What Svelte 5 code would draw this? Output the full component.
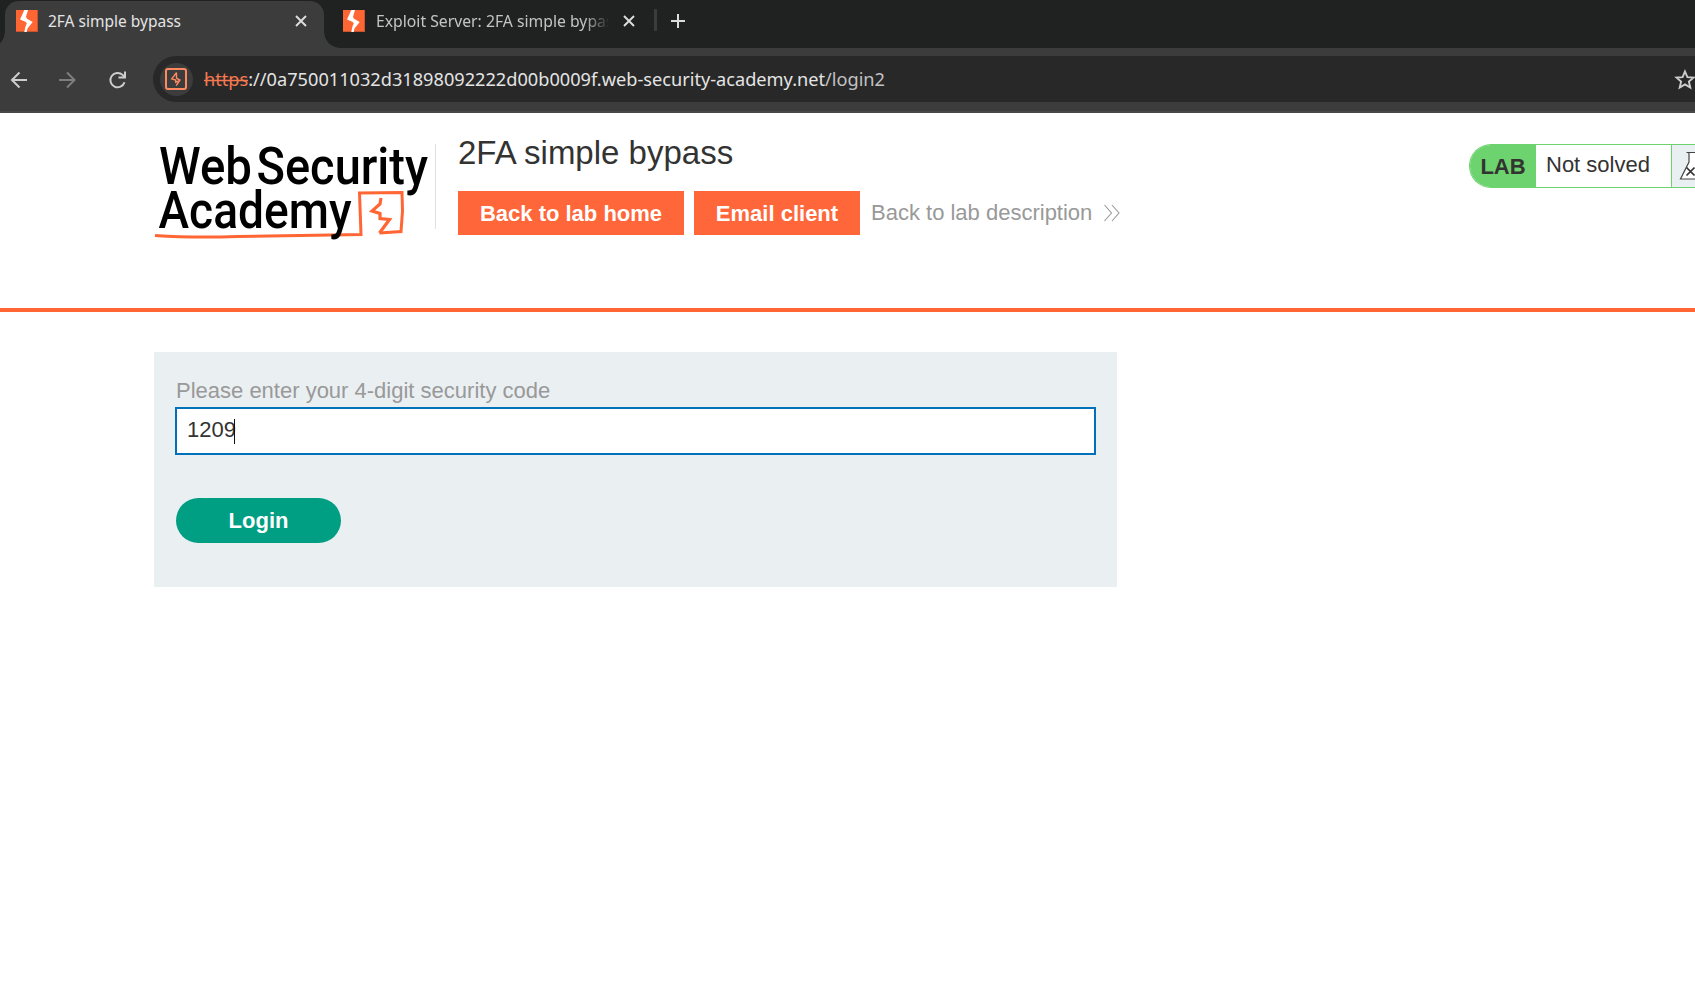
<script>
  let code = $state('1209');
</script>

{#snippet favicon()}
  <svg class="fav" viewBox="0 0 22 22"><rect width="22" height="22" fill="#ff6633"/><path d="M0 21.500h22M21.500 0v22" stroke="#c8552f" stroke-width="1"/><path d="M8.300 0H12L10 6.800l1 2 5.700 3.200-5.200 6.500-.8 3.500H8.300L9.600 16l1.200-2.500-1-1.500L4 9.500z" fill="#fff"/></svg>
{/snippet}
{#snippet close()}
  <svg class="close" viewBox="0 0 12 12"><path d="M1 1l10 10M11 1L1 11" stroke="currentColor" stroke-width="1.900"/></svg>
{/snippet}

<div class="window">
  <div class="tabs">
    <div class="tab active">
      {@render favicon()}
      <span class="title t1"><svg class="line" width="133" height="30"><text x="0" y="21" textLength="133" lengthAdjust="spacingAndGlyphs">2FA simple bypass</text></svg></span>
      {@render close()}
    </div>
    <div class="tab idle">
      {@render favicon()}
      <span class="title t2"><svg class="line" width="260" height="30"><text x="0" y="21" textLength="245" lengthAdjust="spacingAndGlyphs">Exploit Server: 2FA simple bypass</text></svg></span>
      {@render close()}
    </div>
    <i class="sep"></i>
    <svg class="plus" viewBox="0 0 14 14"><path d="M7 0v14M0 7h14" stroke="#dcdcdc" stroke-width="2"/></svg>
  </div>

  <div class="toolbar">
    <svg class="nav" width="126" height="24" viewBox="0 0 126 24" fill="none" stroke-width="2">
      <path d="M17 12H2M9.500 4.500L2 12l7.500 7.500" stroke="#cdcdcd"/>
      <path d="M49 12h15M57 4.500l7.500 7.500-7.500 7.500" stroke="#7e7e7e"/>
      <path d="M114.500 14.200A7.200 7.200 0 1 1 112.600 6.900L115 9.200M108.500 9.500H115V3.500" stroke="#cdcdcd"/>
    </svg>
    <div class="address">
      <span class="site"><svg width="22" height="22" viewBox="0 0 22 22" fill="none" stroke="#ff8a62"><rect x="1" y="1" width="20" height="20" rx="2" stroke-width="2"/><path d="M11.700 4.500L6.700 10.800l4 1.200v2.200l3.800-1.500-3.300 5M11.500 5v5.200l3.200 2" stroke-width="1.400"/></svg></span>
      <svg class="url" width="690" height="40"><text x="0" y="26" textLength="681" lengthAdjust="spacingAndGlyphs"><tspan fill="#f57850">https</tspan><tspan fill="#e4e4e4">://0a750011032d31898092222d00b0009f.web-security-academy.net</tspan><tspan fill="#c2c2c2">/login2</tspan></text><path d="M0 20.500h44" stroke="#f57850" stroke-width="1.500"/></svg>
      <svg class="star" width="22" height="22" viewBox="0 0 22 22"><path d="M11 2.500l2.400 5.600 6.100.5-4.600 4 1.400 6L11 15.400l-5.300 3.200 1.400-6-4.600-4 6.100-.5z" fill="none" stroke="#cdcdcd" stroke-width="1.900"/></svg>
    </div>
  </div>

  <header>
    <svg class="logo" width="281" height="112" viewBox="155 137 281 112">
      <g font-family="Roboto" font-weight="500" font-size="52" fill="#000">
        <text x="159" y="183.500" textLength="93" lengthAdjust="spacingAndGlyphs">Web</text>
        <text x="256.500" y="183.500" textLength="171.500" lengthAdjust="spacingAndGlyphs">Security</text>
      </g>
      <path d="M155 235.500C177 237 209 237.500 238 236.500L361 234.500 359.500 193 402 192.500 402.500 211 401 231.500 379.500 233" fill="none" stroke="#ff6633" stroke-width="3"/>
      <path d="M381 198L380 204 372 211 380 213.500 380 218.500 389.500 219.500 379.500 233" fill="none" stroke="#ff6633" stroke-width="3.200"/>
      <text x="158.500" y="228" font-family="Roboto" font-weight="500" font-size="52" textLength="193" lengthAdjust="spacingAndGlyphs">Academy</text>
      <path d="M435.500 144v85" stroke="#e0e0e0"/>
    </svg>
    <div class="info">
      <h2>2FA simple bypass</h2>
      <div class="links">
        <span class="btn home">Back to lab home</span>
        <span class="btn mail">Email client</span>
        <span class="desc">Back to lab description</span>
        <svg class="chev" width="18" height="18" viewBox="0 0 18 18" fill="none" stroke="#999" stroke-width="1.100"><path d="M1.500 1l7 8-7 8M9 1l7 8-7 8"/></svg>
      </div>
    </div>
    <div class="status">
      <b>LAB</b>
      <span>Not solved</span>
      <i><svg width="28" height="30" viewBox="0 0 28 30"><path d="M7.500 1.500h13M10 2v9L1.500 28h24L18 11V2" fill="#fff" stroke="#444" stroke-width="1.200"/><path d="M7.500 16.500l8 8M15.500 16.500l-8 8" stroke="#333" stroke-width="1.700"/></svg></i>
    </div>
  </header>

  <main>
    <div class="panel">
      <div class="label">Please enter your 4-digit security code</div>
      <div class="input"><span>{code}</span><i></i></div>
      <div class="login">Login</div>
    </div>
  </main>
</div>

<style>
  :global(body) { background: #fff; overflow: hidden; }
  .window { width: 1695px; height: 987px; overflow: hidden; box-sizing: border-box; font-family: "Liberation Sans", Arial, sans-serif; font-size: 22px; color: #333332; }
  svg { display: block; flex: none; overflow: visible; }
  .tabs { height: 48px; background: #202221; display: flex; align-items: flex-start; }
  .tab { display: flex; align-items: center; box-sizing: border-box; height: 47px; margin-top: 1px; padding-bottom: 8px; position: relative; }
  .active { width: 319px; margin-left: 5px; padding-left: 11px; background: #3c3c3c; border-radius: 14px 14px 0 0; color: #e4e4e4; height: 47px; }
  .active::before, .active::after { content: ""; position: absolute; bottom: 0; width: 16px; height: 16px; }
  .active::before { left: -16px; background: radial-gradient(circle at 0 0, transparent 15.500px, #3c3c3c 16px); }
  .active::after { right: -16px; background: radial-gradient(circle at 100% 0, transparent 15.500px, #3c3c3c 16px); }
  .idle { width: 330px; padding-left: 19px; color: #c4c4c4; }
  .fav { width: 22px; height: 22px; }
  .title { height: 30px; }
  .t1 { width: 236px; margin-left: 10px; }
  .t2 { width: 232px; margin-left: 11px; overflow: hidden; -webkit-mask-image: linear-gradient(to right, #000 208px, transparent 234px); }
  .line, .url { font-family: "Noto Sans", sans-serif; }
  .line { font-size: 16.500px; fill: currentColor; }
  .close { width: 12px; height: 12px; margin-left: 11px; color: #dedede; }
  .t2 + .close { margin-left: 15px; }
  .sep { width: 3px; height: 22px; background: #3c3c3c; margin-top: 9px; border-radius: 1px; }
  .plus { width: 14px; height: 14px; margin: 14px 0 0 14px; }
  .toolbar { height: 65px; box-sizing: border-box; background: #3c3c3c; border-bottom: 2px solid #484848; padding: 8px 0 0 10px; display: flex; }
  .nav { margin: 12px 17px 0 0; }
  .address { flex: 1; height: 46px; background: #282828; border-radius: 23px 0 0 23px; display: flex; align-items: center; padding-left: 7px; overflow: hidden; }
  .site { width: 33px; height: 33px; border-radius: 50%; background: #3c3c3c; display: flex; align-items: center; padding-left: 5px; box-sizing: border-box; flex: none; }
  .url { margin: 2px 0 0 11px; font-size: 18px; }
  .star { margin: 1px 0 0 780px; }
  header { height: 199px; box-sizing: border-box; border-bottom: 4px solid #ff6633; padding-left: 155px; padding-top: 24px; display: flex; align-items: flex-start; }
  .info { margin-left: 22px; }
  h2 { font-weight: 400; font-size: 33px; line-height: 38px; margin: -3px 0 19px; white-space: nowrap; }
  .links { display: flex; align-items: center; height: 44px; white-space: nowrap; }
  .btn { background: #ff6639; color: #fff; font-weight: 700; height: 44px; line-height: 45px; text-align: center; margin-right: 10px; }
  .home { width: 226px; }
  .mail { width: 166px; }
  .desc { color: #999; margin-left: 1px; }
  .chev { margin-left: 11px; }
  .status { display: flex; margin: 7px 0 0 auto; width: 226px; height: 44px; flex: none; box-sizing: border-box; border: 1px solid #6cd36e; border-right: 0; border-radius: 22px 0 0 22px; overflow: hidden; white-space: nowrap; }
  .status b { width: 66px; background: #6cd36e; line-height: 43px; text-align: center; }
  .status span { width: 136px; line-height: 39px; padding-left: 10px; box-sizing: border-box; border-right: 1px solid #6cd36e; }
  .status i { width: 23px; background: #eaeff2; overflow: hidden; padding: 6px 0 0 7px; box-sizing: border-box; }
  main { padding: 40px 0 0 154px; }
  .panel { width: 963px; height: 235px; box-sizing: border-box; background: #eaeff2; padding: 26px 21px 0; }
  .label { color: #999; height: 29px; line-height: 26px; padding-left: 1px; }
  .input { width: 921px; height: 48px; box-sizing: border-box; border: 2px solid #0070bb; background: #fff; padding-left: 10px; display: flex; align-items: center; }
  .input span { margin-top: -2px; }
  .input i { width: 1px; height: 25px; background: #111; margin-left: -2px; }
  .login { width: 165px; height: 45px; line-height: 45px; margin: 43px 0 0 1px; border-radius: 23px; background: #009e82; color: #fff; text-align: center; font-weight: 700; }
</style>
